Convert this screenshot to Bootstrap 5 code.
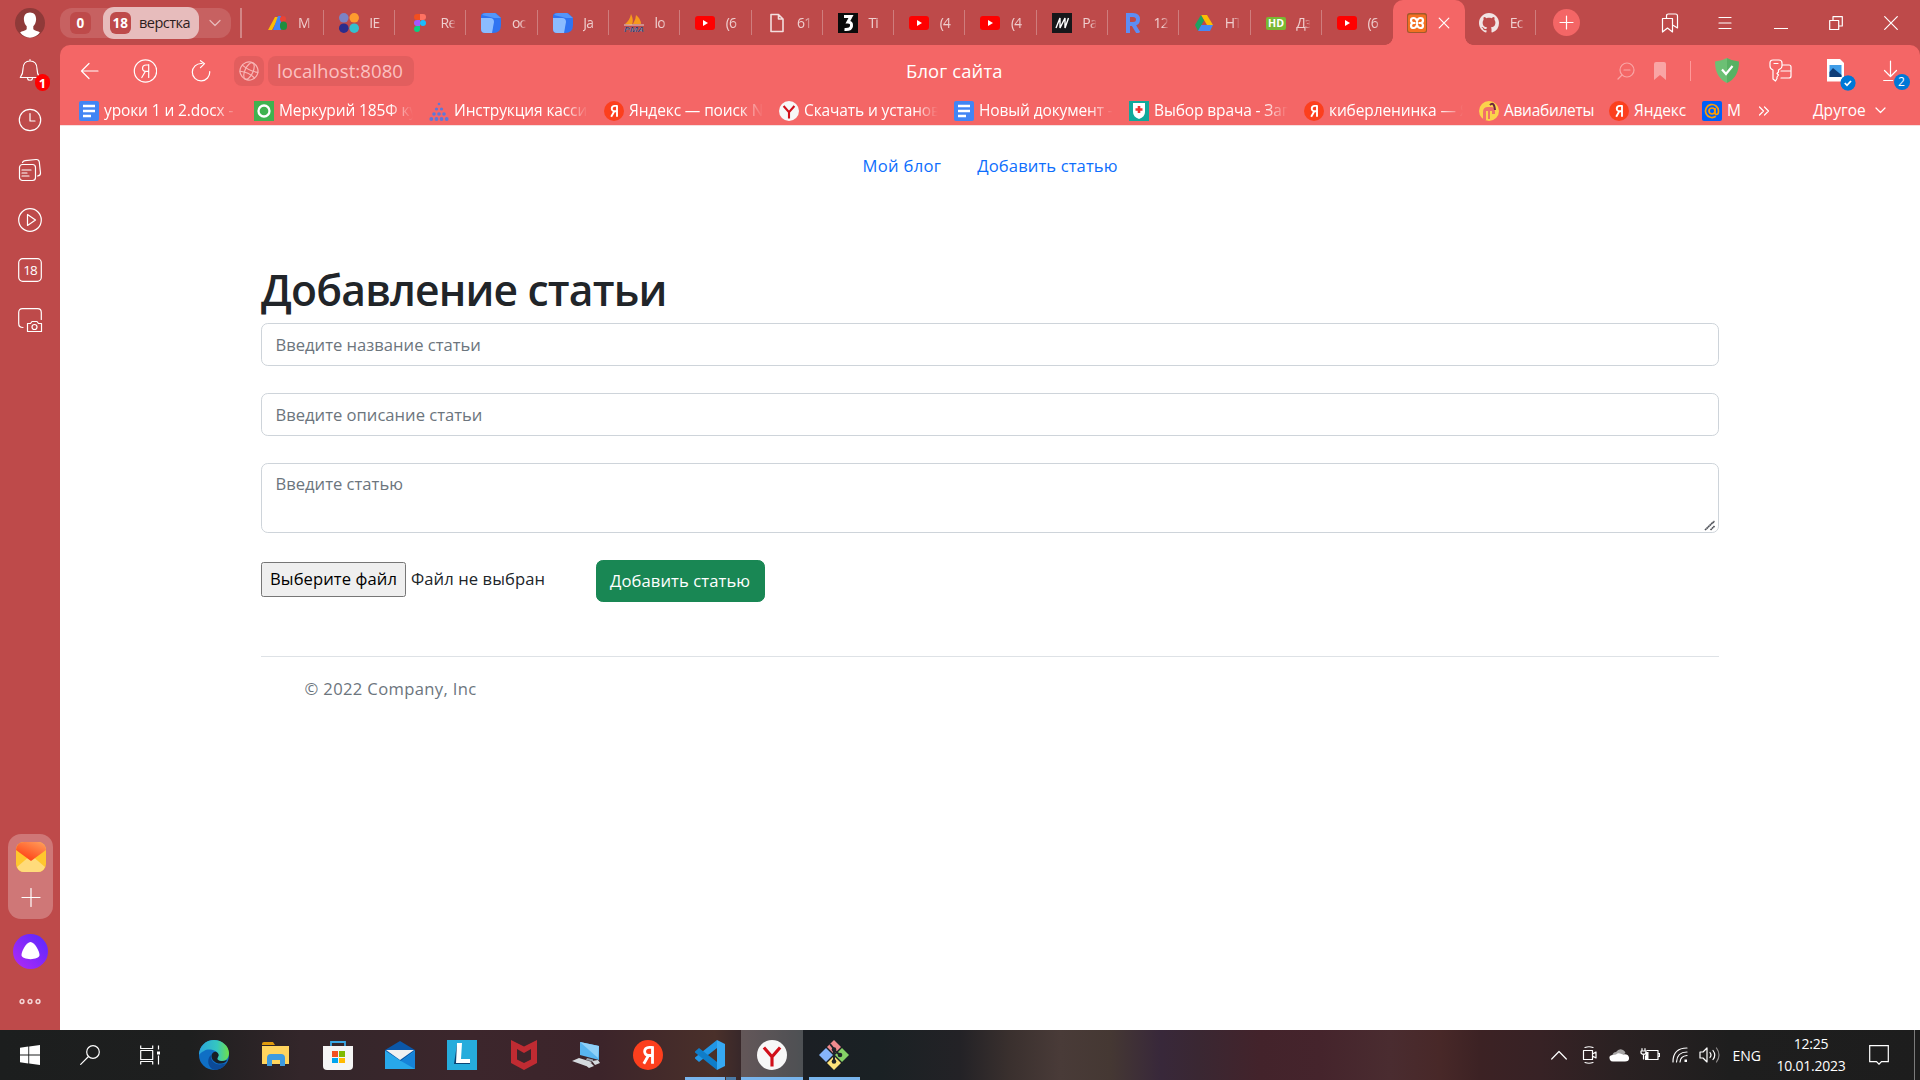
<!DOCTYPE html>
<html lang="ru">
<head>
<meta charset="utf-8">
<title>Блог сайта</title>
<link href="https://cdn.jsdelivr.net/npm/bootstrap@5.3.0/dist/css/bootstrap.min.css" rel="stylesheet">
<style>
html{font-size:18px}
body{width:1920px;height:1080px;overflow:hidden;font-family:"Open Sans","Noto Sans",sans-serif;background:#be4a4a}
svg{display:block;flex:none}
.ln{fill:none;stroke:#fff;stroke-width:1.2;stroke-linecap:round;stroke-linejoin:round}
.clip{overflow:hidden;white-space:nowrap}
.side{width:60px;flex:none}
.side-ic{height:50px}
.side-panel{width:45px;height:85px;border-radius:13px;background:#cf7777;margin-left:1px;margin-top:489px;padding-top:8px}
.dot-num{position:absolute;display:flex;align-items:center;justify-content:center;color:#fff;border-radius:9px}
.tabs{height:45px}
.grp{width:171px;height:30px;border-radius:12px;background:#c76161;margin-top:1px;padding-left:9.5px}
.grp-n{width:21.5px;height:22px;border-radius:6px;background:#be4a4a;color:#fff;font:bold 13.5px/22px "Open Sans",sans-serif;text-align:center}
.grp-on{width:95.5px;height:32px;border-radius:11px;background:#e7bcbc;color:#2c1c1c;font-size:14.5px;margin-left:12px;padding-left:6.5px}
.tb{width:71.3px;height:45px;padding-left:15px;position:relative;flex:none}
.tb::after{content:"";width:1px;height:25px;background:#cf7d7d;margin-left:auto}
.tb.nosep::after{display:none}
.tb span{width:14px;margin-left:10.5px;font-size:14px;color:#efcfcf;letter-spacing:-.8px;-webkit-mask-image:linear-gradient(90deg,#000 60%,rgba(0,0,0,.15));mask-image:linear-gradient(90deg,#000 60%,rgba(0,0,0,.15))}
.tb-on{width:72px;background:#f46666;border-radius:10px 10px 0 0;padding-left:14px}
.tb-on::before,.tb-on i{content:"";position:absolute;bottom:0;width:8px;height:8px;background:radial-gradient(circle at 0 0,transparent 7.5px,#f46666 8px)}
.tb-on::before{left:-8px}
.tb-on i{right:-8px;background:radial-gradient(circle at 100% 0,transparent 7.5px,#f46666 8px)}
.pane{background:#f46666;border-radius:10px 10px 0 0;height:80px}
.addr{height:51px}
.bx{background:#e25e5e;border-radius:8px;height:30px}
.bmk{height:29px;padding-left:19px;color:#fff;font-size:15.5px;letter-spacing:-.12px}
.bk{width:175px;height:20px;flex:none}
.bk span{width:134px;margin-left:5px;-webkit-mask-image:linear-gradient(90deg,#000 82%,transparent);mask-image:linear-gradient(90deg,#000 82%,transparent)}
.sheet{height:905px;background:#fff;border-top:1px solid #f6dede}
.wrap{width:1458px;margin:0 auto}
.t17{font-size:16.6px}
.head-nav .nav-link{letter-spacing:.1px;line-height:27px}
.head-nav{padding-top:17px;padding-bottom:18px;margin-bottom:56px}
h1{font-weight:600;font-size:42.6px;line-height:54px;letter-spacing:-.83px}
.form-control{font-size:16.6px;height:42.75px;margin-bottom:27px;border-color:#ced4da;color:#212529}
.form-control::placeholder{color:#6c757d}
textarea.form-control{height:70px;resize:none;display:block;padding-top:8px}
.grip{position:absolute;right:3px;bottom:2px}
.pick{border:1px solid #767676;background:#efefef;border-radius:2.5px;height:35px;width:145px;padding:0;color:#000;white-space:nowrap;letter-spacing:.08px}
.foot{margin-top:54px;border-top:1px solid #dee2e6;padding:20px 0 0 43.5px;color:#6c757d;letter-spacing:.35px}
.task{height:50px;background:linear-gradient(90deg,#1c1e1e 0,#1e1f1f 190px,#33262a 300px,#3c262c 470px,#3c242a 600px,#4a302a 715px,#38282a 741px,#1b1f24 805px,#1a2124 880px,#232226 960px,#3a302e 1010px,#493b38 1060px,#453833 1110px,#38283a 1160px,#3a2732 1200px,#43232b 1260px,#45242c 1320px,#4a2c30 1390px,#482828 1440px,#3c2224 1480px,#372225 1540px,#2a2122 1620px,#1e1e1e 1730px,#1d1d1d)}
.tk{width:62px;height:50px;position:relative;flex:none}
.tk.act{background:rgba(255,255,255,.22)}
.tk.st{width:60px}
.ub{position:absolute;bottom:0;height:3px;background:#78b4ec;left:6px;right:5px}
.act .ub{left:0;right:0}
.tray{color:#fff;font-size:14px}
</style>
</head>
<body>
<svg width="0" height="0" class="position-absolute">
<defs>
<linearGradient id="edgeA" x1="0" y1="0" x2="1" y2="0"><stop offset="0" stop-color="#2aa5dc"/><stop offset=".6" stop-color="#35c6c0"/><stop offset="1" stop-color="#6fe04a"/></linearGradient>
<linearGradient id="alice" x1="1" y1="0" x2="0" y2="1"><stop offset="0" stop-color="#5528ff"/><stop offset="1" stop-color="#b429f5"/></linearGradient>
<linearGradient id="mailg" x1="1" y1="0" x2="0.3" y2="1"><stop offset="0" stop-color="#ffa15e"/><stop offset="1" stop-color="#ff3d12"/></linearGradient>
<linearGradient id="shield"><stop offset=".5" stop-color="#6cc074"/><stop offset=".5" stop-color="#58b163"/></linearGradient>
</defs>
<symbol id="yt" viewBox="0 0 20 20"><rect y="3" width="20" height="14" rx="3" fill="#f00"/><path d="M8 7l5 3-5 3z" fill="#fff"/></symbol>
<symbol id="ya" viewBox="0 0 20 20"><circle cx="10" cy="10" r="10" fill="#fc3f1d"/><path d="M13 4.200v11.600M13 4.900h-2.200c-4 0-4 5.400-.3 5.400H13M10.300 10.300L7.200 15.800" fill="none" stroke="#fff" stroke-width="1.900"/></symbol>
<symbol id="yb" viewBox="0 0 20 20"><circle cx="10" cy="10" r="10" fill="#f7f7f7"/><path d="M4.600 5L10 11.200 15.400 5M10 11v6.600" fill="none" stroke="#d1101a" stroke-width="2.100"/></symbol>
<symbol id="doc" viewBox="0 0 20 20"><rect width="20" height="20" rx="2" fill="#4285f4"/><path d="M4 5h12M4 10h12M4 15h8" stroke="#fff" stroke-width="2.400"/></symbol>
<symbol id="cube" viewBox="0 0 20 20"><path d="M0 3Q0 0 4 0h11l5 5v7q0 8-8 8H4q-4 0-4-4z" fill="#2f74f2"/><path d="M0 5h9q4 0 4 4l-2 11H4q-4 0-4-4z" fill="#8bbcff"/><path d="M1 2Q2 0 5 0h9l6 5h-7z" fill="#5596fa"/></symbol>
</svg>

<div class="d-flex flex-column h-100">
<div class="d-flex" style="height:1030px">
<aside class="side d-flex flex-column align-items-center">
  <div class="tabs d-flex align-items-center justify-content-center">
    <svg width="30" height="30" viewBox="0 0 30 30"><circle cx="15" cy="15" r="15" fill="#8f3a39"/><path d="M15 4.500c4.200 0 6.300 3 6.100 7-.1 3-1.300 5.300-2.800 6.800v3c1.500 1.500 5 1.800 6.600 3.300-5 6.800-14.800 6.800-19.800 0 1.600-1.500 5.300-1.800 6.600-3.300v-3C10.200 16.800 9 14.500 8.900 11.500c-.2-4 1.900-7 6.100-7z" fill="#fff"/></svg>
  </div>
  <div class="side-ic d-flex align-items-center position-relative"><svg class="ln" width="24" height="24" viewBox="0 0 24 24"><path d="M12 1.500v1.500M2.300 19.500c2-2.500 2.700-4 2.700-8.500 0-5 2.500-8 7-8s7 3 7 8c0 4.500.7 6 2.700 8.500zM9.500 20.500c.5 2.300 4.500 2.300 5 0"/></svg><span class="dot-num" style="left:17px;top:29px;width:15px;height:17px;background:#f00;font:bold 13px 'Open Sans',sans-serif">1</span></div>
  <div class="side-ic d-flex align-items-center"><svg class="ln" width="24" height="24" viewBox="0 0 24 24"><circle cx="12" cy="12" r="10.700"/><path d="M12 5.500V13h5"/></svg></div>
  <div class="side-ic d-flex align-items-center"><svg class="ln" width="24" height="24" viewBox="0 0 24 24"><rect x="1.500" y="6.500" width="16" height="16" rx="3"/><path d="M4 12h9M4 15h5M4 18h7M4.500 4.500Q5 3 7 2.700L18 1.500q3-.2 3.300 2.500L22.500 15q.2 2.500-3 3"/></svg></div>
  <div class="side-ic d-flex align-items-center"><svg class="ln" width="24" height="24" viewBox="0 0 24 24"><circle cx="12" cy="12" r="11.300"/><path d="M9.500 6.500v11l8-5.500z"/></svg></div>
  <div class="side-ic d-flex align-items-center position-relative"><svg class="ln" width="24" height="24" viewBox="0 0 24 24"><rect x=".7" y=".7" width="22.600" height="22.600" rx="4"/></svg><span class="dot-num w-100" style="left:0;top:15px;height:20px;font-size:13.500px;letter-spacing:-1px">18</span></div>
  <div class="side-ic d-flex align-items-center"><svg class="ln" width="26" height="24" viewBox="-1 0 26 24"><path d="M5 19.500Q.7 19.500.7 15.500V4.500Q.7.700 4.500.700h15q3.800 0 3.800 3.800v7M9.500 15.500h3l1.500-2h5l1.500 2h3v8h-14z"/><circle cx="16.500" cy="19" r="2.500"/></svg></div>
  <div class="side-panel d-flex flex-column align-items-center">
    <svg width="30" height="30" viewBox="0 0 30 30"><rect width="30" height="30" rx="8" fill="#ffc72e"/><path d="M1 25L15 13l14 12q-2 5-7 5H8q-5 0-7-5z" fill="#ffdb7b"/><path d="M0 8q1-8 8-8h14q7 0 8 8L15 19z" fill="url(#mailg)"/></svg>
    <svg class="ln" style="margin-top:16px" width="20" height="20" viewBox="0 0 20 20"><path d="M1 9.500h18M10 .5v18"/></svg>
  </div>
  <svg style="margin-top:15px" width="35" height="35" viewBox="0 0 35 35"><circle cx="17.500" cy="17.500" r="17.500" fill="url(#alice)"/><path d="M17.500 8c4 0 9 9 9 13 0 5.500-18 5.500-18 0 0-4 5-13 9-13z" fill="#fff"/></svg>
  <svg class="ln" style="margin-top:28px" width="24" height="8" viewBox="0 0 24 8"><g stroke-width="1.500" stroke="#f4d6d6"><circle cx="4" cy="4.500" r="1.900"/><circle cx="12" cy="4.500" r="1.900"/><circle cx="20" cy="4.500" r="1.900"/></g></svg>
</aside>

<main class="flex-grow-1">
  <div class="tabs d-flex align-items-center">
    <div class="grp d-flex align-items-center">
      <div class="grp-n">0</div>
      <div class="grp-on d-flex align-items-center"><div class="grp-n">18</div><span style="margin-left:8px;letter-spacing:-.5px">верстка</span></div>
      <svg class="ln ms-auto" style="margin-right:10px;stroke:#e8bcbc" width="12" height="8" viewBox="0 0 12 8"><path d="M1 1.500l5 5 5-5"/></svg>
    </div>
    <div style="width:2px;height:30px;background:#d28585;margin:0 10.500px 0 9px"></div>
    <div class="tb d-flex align-items-center"><svg width="20" height="20" viewBox="0 0 20 20"><path d="M0 17L7 4h4L4 17z" fill="#fbbc04"/><path d="M5 17L10 3h3v14z" fill="#4285f4"/><rect x="12" y="3" width="6" height="6" rx="3" fill="#ea4335"/><rect x="12" y="8.500" width="7" height="8.500" rx="3.500" fill="#1e8e3e"/></svg><span class="clip">M</span></div>
    <div class="tb d-flex align-items-center"><svg width="20" height="20" viewBox="0 0 20 20"><circle cx="4.800" cy="4.800" r="4.800" fill="#7b83c4"/><circle cx="15.200" cy="4.800" r="4.800" fill="#ff9c2e"/><circle cx="4.800" cy="15.200" r="4.800" fill="#2b2c8c"/><circle cx="15.200" cy="15.200" r="4.800" fill="#35c0ce"/></svg><span class="clip">IE</span></div>
    <div class="tb d-flex align-items-center"><svg width="20" height="20" viewBox="0 0 20 20"><path d="M10 1H7a3 3 0 000 6h3z" fill="#f24e1e"/><path d="M10 1h3a3 3 0 010 6h-3z" fill="#ff7262"/><path d="M10 7H7a3 3 0 000 6h3z" fill="#a259ff"/><circle cx="13" cy="10" r="3" fill="#1abcfe"/><path d="M10 13H7a3 3 0 103 3z" fill="#0acf83"/></svg><span class="clip">Re</span></div>
    <div class="tb d-flex align-items-center"><svg width="20" height="20"><use href="#cube"/></svg><span class="clip">ос</span></div>
    <div class="tb d-flex align-items-center"><svg width="20" height="20"><use href="#cube"/></svg><span class="clip">Ja</span></div>
    <div class="tb d-flex align-items-center"><svg width="20" height="20" viewBox="0 0 20 20"><path d="M1 11Q6 7 7 1q3 6 1 11zM9 11q3-5 3-9 5 4 5 9z" fill="#f79a1c"/><path d="M0 12h20" stroke="#dfd7d0"/><text x="0" y="19" font-size="7.500" font-weight="bold" font-style="italic" fill="#23245c" textLength="20" lengthAdjust="spacingAndGlyphs" stroke="#ddd" stroke-width=".2">PMA</text></svg><span class="clip">lo</span></div>
    <div class="tb d-flex align-items-center"><svg width="20" height="20"><use href="#yt"/></svg><span class="clip">(6</span></div>
    <div class="tb d-flex align-items-center"><svg class="ln" style="stroke:#f3dede" width="20" height="20" viewBox="0 0 20 20"><path stroke-width="1.600" d="M4 1.500h7.500L16 6v12.500H4zM11.500 1.500V6H16"/></svg><span class="clip">61</span></div>
    <div class="tb d-flex align-items-center"><svg width="20" height="20" viewBox="0 0 20 20"><path d="M0 0h20v20H0z" fill="#0b0b0b"/><path d="M6 3.500h7L10 9q4 0 3.500 4-.5 4-7 3.500" fill="none" stroke="#fff" stroke-width="3"/></svg><span class="clip">Ti</span></div>
    <div class="tb d-flex align-items-center"><svg width="20" height="20"><use href="#yt"/></svg><span class="clip">(4</span></div>
    <div class="tb d-flex align-items-center"><svg width="20" height="20"><use href="#yt"/></svg><span class="clip">(4</span></div>
    <div class="tb d-flex align-items-center"><svg width="20" height="20" viewBox="0 0 20 20"><path d="M0 0h20v20H0z" fill="#17171a"/><path d="M4 15L8 5v10l5-10v10l3.500-10" fill="none" stroke="#fff" stroke-width="1.400"/></svg><span class="clip">Pa</span></div>
    <div class="tb d-flex align-items-center"><svg width="20" height="20" viewBox="0 0 20 20"><path d="M5 20V2h5q5 0 5 4.500T10 11H5M10 11l5.500 9" fill="none" stroke="#5d8df5" stroke-width="4"/></svg><span class="clip">12</span></div>
    <div class="tb d-flex align-items-center"><svg width="20" height="20" viewBox="0 0 20 20"><path d="M7 2h6l6 10h-6z" fill="#fbbc04"/><path d="M7 2l3 5.500L4 18l-3-6z" fill="#1da362"/><path d="M7.300 12H19l-3 6H4z" fill="#4688f4"/></svg><span class="clip">НТ</span></div>
    <div class="tb d-flex align-items-center"><svg width="20" height="20" viewBox="0 0 20 20"><rect y="4" width="20" height="13" rx="2" fill="#78b833"/><text x="2" y="14.300" font-size="10" font-weight="bold" fill="#fff" textLength="16" lengthAdjust="spacingAndGlyphs">HD</text></svg><span class="clip">Дз</span></div>
    <div class="tb nosep d-flex align-items-center"><svg width="20" height="20"><use href="#yt"/></svg><span class="clip">(6</span></div>
    <div class="tb tb-on nosep d-flex align-items-center"><svg width="20" height="20" viewBox="0 0 20 20"><rect width="20" height="20" rx="2.500" fill="#a05a2c"/><rect x="1" y="1.500" width="18" height="17.500" rx="2" fill="#f37021"/><path d="M8 10H6.500Q4 10 4 7.300 4 5 6.500 5 9 5 10 8q1-3 3.500-3Q16 5 16 7.300 16 10 13.500 10H12M8 10H6.500Q4 10 4 12.700 4 15 6.500 15 9 15 10 12q1 3 3.500 3 2.500 0 2.500-2.300Q16 10 13.500 10H12M8.500 10h3" fill="none" stroke="#fff" stroke-width="2.200"/></svg>
      <svg class="ln" style="margin-left:11px" width="12" height="12" viewBox="0 0 12 12"><path d="M1.200 1.200l9.600 9.600M10.800 1.200l-9.600 9.600"/></svg><i></i></div>
    <div class="tb d-flex align-items-center" style="padding-left:14px;width:71px"><svg width="20" height="20" viewBox="0 0 16 16"><path fill="#f1e4e4" d="M8 0C3.580 0 0 3.580 0 8c0 3.540 2.290 6.530 5.470 7.590.4.070.55-.17.55-.38 0-.19-.01-.82-.01-1.490-2.010.37-2.530-.49-2.690-.94-.09-.23-.48-.94-.82-1.130-.28-.15-.68-.52-.01-.53.63-.01 1.080.58 1.230.82.72 1.210 1.870.87 2.330.66.07-.52.28-.87.51-1.070-1.780-.2-3.640-.89-3.640-3.950 0-.87.31-1.590.82-2.150-.08-.2-.36-1.020.08-2.120 0 0 .67-.21 2.200.82.64-.18 1.320-.27 2-.27s1.360.09 2 .27c1.530-1.040 2.200-.82 2.200-.82.44 1.100.16 1.920.08 2.120.51.56.82 1.270.82 2.150 0 3.070-1.870 3.750-3.650 3.950.29.25.54.73.54 1.480 0 1.070-.01 1.930-.01 2.200 0 .21.15.46.55.38A8.010 8.010 0 0016 8c0-4.420-3.580-8-8-8"/></svg><span class="clip">Ec</span></div>
    <svg class="ln" style="margin-left:16.500px" width="27" height="27" viewBox="0 0 27 27"><circle cx="13.500" cy="13.500" r="13.500" fill="#f46666" stroke="none"/><path d="M7 13.500h13M13.500 7v13"/></svg>
    <div class="ms-auto d-flex align-items-center" style="padding-right:22px">
      <svg class="ln" width="18" height="20" viewBox="0 0 18 20"><path d="M1.500 5.500h10V19l-5-4-5 4zM5.500 5V3q0-2 2-2h7q2 0 2 2v12l-4-2.500"/></svg>
      <svg class="ln" style="margin-left:39px" width="14" height="14" viewBox="0 0 14 14"><path d="M1 1.500h12M1 7h12M1 12.500h12"/></svg>
      <svg class="ln" style="margin-left:42px" width="14" height="14" viewBox="0 0 14 14"><path d="M.5 12.500h13"/></svg>
      <svg class="ln" style="margin-left:41px" width="14" height="14" viewBox="0 0 14 14"><path d="M.7 4.500h9v9h-9zM4 4V.7h9.300V10H10"/></svg>
      <svg class="ln" style="margin-left:41px" width="14" height="14" viewBox="0 0 14 14"><path d="M.7.700l12.600 12.600M13.300.700L.7 13.300"/></svg>
    </div>
  </div>

  <div class="pane">
    <div class="addr d-flex align-items-center position-relative" style="padding-left:20px">
      <svg class="ln" width="19" height="18" viewBox="0 0 19 18"><path d="M18 9H1.500M9 1.500L1.500 9 9 16.500"/></svg>
      <svg class="ln" style="margin-left:34px" width="24" height="24" viewBox="0 0 24 24"><circle cx="12.500" cy="12" r="11.200"/><path d="M15.700 5.500v13M15.700 6H13c-4.500 0-4.500 6.300-.5 6.300h3.200M12.300 12.500l-3.500 6"/></svg>
      <svg class="ln" style="margin-left:34px" width="20" height="22" viewBox="0 0 20 22"><path d="M11 3.500H10.500a8.700 8.700 0 108.200 8M9.500.700l4 3-4 4"/></svg>
      <div class="bx d-flex align-items-center justify-content-center" style="width:29.500px;margin-left:23px"><svg class="ln" style="stroke:#f8b5b5" width="20" height="20" viewBox="0 0 20 20"><g transform="rotate(25 10 10)"><circle cx="10" cy="10" r="9"/><ellipse cx="10" cy="10" rx="4" ry="9"/><path d="M1.500 7.500q8.500 2.500 17 0M2 14q8-3 16 0"/></g></svg></div>
      <div class="bx d-flex align-items-center" style="width:146.500px;margin-left:4px;padding-left:9.500px;color:#fbc1c1;font-size:18.600px"><span style="letter-spacing:.05px">localhost:8080</span></div>
      <span style="margin-left:492px;color:#fff;font-size:18.400px;letter-spacing:.15px">Блог сайта</span>
      <div class="ms-auto d-flex align-items-center" style="padding-right:22px">
        <svg class="ln" style="stroke:#f9a5a5" width="18" height="18" viewBox="0 0 18 18"><circle cx="10" cy="8" r="7"/><path d="M5 13l-4 4M7 8h6"/></svg>
        <svg style="margin-left:19px" width="12" height="18" viewBox="0 0 12 18"><path d="M0 18V2q0-2 2-2h8q2 0 2 2v16l-6-5z" fill="#f9a5a5"/></svg>
        <div style="width:1px;height:20px;background:#f99;margin:0 24px 0 24px"></div>
        <svg width="24" height="25" viewBox="0 0 24 25"><path d="M12 0q5 3 12 3.500 0 16-12 21.500Q0 19.500 0 3.500 7 3 12 0z" fill="url(#shield)"/><path d="M7 11.500l4 4.500 6.500-8" fill="none" stroke="#fff" stroke-width="2.200"/></svg>
        <svg class="ln" style="margin-left:30px" width="23" height="23" viewBox="0 0 23 23"><path d="M4 1h6q3 0 3 3v3q0 2-2 3l-1.500 1v2L8 14.500 9.500 16 8 18v1.500L6.500 22 4 20v-9Q1 10 1 7V4q0-3 3-3zM5 4.500h4M14 6h6q2 0 2 2v9q0 2-2 2h-8M12 12h10"/></svg>
        <div class="position-relative" style="margin-left:34px"><svg width="19" height="23" viewBox="0 0 19 23"><path d="M1 0h13l4 4v18.500H1z" fill="#fff"/><rect x="3.500" y="6" width="12" height="12" fill="#3f9de8"/><path d="M3.500 18v-5l3.500-4 8.500 7v2z" fill="#0d3d78"/></svg>
        <svg class="dot-num" style="left:13.500px;top:15.500px" width="16" height="16" viewBox="0 0 16 16"><circle cx="8" cy="8" r="7.700" fill="#0078d7"/><path d="M4.800 8l2.200 2.300 4-4.300" fill="none" stroke="#fff" stroke-width="1.800"/></svg></div>
        <div class="position-relative" style="margin-left:38px"><svg class="ln" width="15" height="22" viewBox="0 0 15 22"><path d="M7.500 1v15M1.500 10.500l6 6 6-6M.7 20.500h9"/></svg><span class="dot-num" style="left:10.500px;top:14px;width:16px;height:16px;background:#0078d7;font-size:12px">2</span></div>
      </div>
    </div>
    <div class="bmk d-flex align-items-center clip">
      <div class="bk d-flex align-items-center"><svg width="20" height="20"><use href="#doc"/></svg><span class="clip">уроки 1 и 2.docx - </span></div>
      <div class="bk d-flex align-items-center"><svg width="20" height="20" viewBox="0 0 20 20"><path d="M0 0h20v20H0z" fill="#3fb24f"/><circle cx="10" cy="10" r="5.500" fill="none" stroke="#fff" stroke-width="2.300"/></svg><span class="clip">Меркурий 185Ф ку</span></div>
      <div class="bk d-flex align-items-center"><svg width="20" height="20" viewBox="0 0 20 20" fill="#5c78d8"><circle cx="10" cy="3" r="1.300"/><circle cx="7.500" cy="8" r="1.600"/><circle cx="12.500" cy="8" r="1.600"/><circle cx="5" cy="13" r="1.800"/><circle cx="10" cy="13" r="1.800"/><circle cx="15" cy="13" r="1.800"/><circle cx="2.300" cy="18" r="1.900"/><circle cx="7.500" cy="18" r="1.900"/><circle cx="12.500" cy="18" r="1.900"/><circle cx="17.700" cy="18" r="1.900"/></svg><span class="clip">Инструкция касси</span></div>
      <div class="bk d-flex align-items-center"><svg width="20" height="20"><use href="#ya"/></svg><span class="clip">Яндекс — поиск N</span></div>
      <div class="bk d-flex align-items-center"><svg width="20" height="20"><use href="#yb"/></svg><span class="clip">Скачать и установ</span></div>
      <div class="bk d-flex align-items-center"><svg width="20" height="20"><use href="#doc"/></svg><span class="clip">Новый документ - </span></div>
      <div class="bk d-flex align-items-center"><svg width="20" height="20" viewBox="0 0 20 20"><path d="M0 0h20v20H0z" fill="#10a99b"/><path d="M4 2h12v9q0 5-6 7-6-2-6-7z" fill="#fff"/><path d="M10 5v7M6.500 8.500h7" stroke="#e33" stroke-width="2.600"/></svg><span class="clip">Выбор врача - Зап</span></div>
      <div class="bk d-flex align-items-center"><svg width="20" height="20"><use href="#ya"/></svg><span class="clip">киберленинка — Я</span></div>
      <svg width="20" height="20" viewBox="0 0 20 20"><circle cx="10" cy="10" r="10" fill="#fbd34b"/><path d="M4 19v-8q0-5 5-5h3q4 0 4 5v2h-3v-3h-2v8h-2v-8H7v9z" fill="#f0706a"/><path d="M11 4q4-4 5 5" fill="none" stroke="#6b2440" stroke-width="2"/></svg><span style="margin:0 15px 0 5px;letter-spacing:-.3px">Авиабилеты</span>
      <svg width="20" height="20"><use href="#ya"/></svg><span style="margin:0 16px 0 5px">Яндекс</span>
      <svg width="20" height="20" viewBox="0 0 20 20"><rect width="20" height="20" rx="2" fill="#005ff9"/><path d="M13 7v4.500q0 2 1.700 2t1.800-3.500a6.500 6.500 0 10-2.700 5.300" fill="none" stroke="#ff9e00" stroke-width="1.700"/><circle cx="10" cy="10" r="3" fill="none" stroke="#ff9e00" stroke-width="1.700"/></svg><span class="clip" style="width:14px;margin-left:5px">M</span>
      <svg class="ln" style="margin-left:17px" width="12" height="10" viewBox="0 0 12 10"><path d="M1.500 1l4 4-4 4M6.500 1l4 4-4 4"/></svg>
      <span style="margin-left:43px;letter-spacing:.05px">Другое</span>
      <svg class="ln" style="margin-left:9px" width="11" height="7" viewBox="0 0 11 7"><path d="M1 1l4.500 4.500L10 1"/></svg>
    </div>
  </div>

  <div class="sheet">
    <div class="wrap">
      <header class="head-nav">
        <ul class="nav justify-content-center t17">
          <li class="nav-item"><a class="nav-link" href="#" style="letter-spacing:.33px">Мой блог</a></li>
          <li class="nav-item"><a class="nav-link" href="#">Добавить статью</a></li>
        </ul>
      </header>
      <h1 style="margin-bottom:7px">Добавление статьи</h1>
      <form>
        <input class="form-control" placeholder="Введите название статьи">
        <input class="form-control" placeholder="Введите описание статьи">
        <div class="position-relative">
          <textarea class="form-control" placeholder="Введите статью"></textarea>
          <svg class="grip" width="12" height="12" viewBox="0 0 12 12"><path d="M1 11L10.500 2M6.500 11l4-4" stroke="#50535a" stroke-width="1.700" stroke-dasharray="1.800 .3"/></svg>
        </div>
        <div class="d-flex align-items-center t17">
          <div class="d-flex align-items-center" style="margin-bottom:3px"><button type="button" class="pick">Выберите файл</button><span style="margin-left:5px;letter-spacing:.08px">Файл не выбран</span></div>
          <button type="button" class="btn btn-success p-0" style="margin-left:50.500px;width:169px;height:42.750px;font-size:16.600px;letter-spacing:.1px;padding-top:1px!important">Добавить статью</button>
        </div>
      </form>
      <footer class="foot t17">© 2022 Company, Inc</footer>
    </div>
  </div>
</main>
</div>

<div class="task d-flex align-items-center">
  <div class="tk st d-flex align-items-center justify-content-center"><svg width="20" height="20" viewBox="0 0 20 20" fill="#fff"><path d="M0 2.800L8.300 1.600v7.900H0zM9.200 1.500L20 0v9.500H9.200zM0 10.400h8.300v8L0 17.200zM9.200 10.400H20V20L9.200 18.500z"/></svg></div>
  <div class="tk st d-flex align-items-center justify-content-center"><svg class="ln" width="20" height="20" viewBox="0 0 20 20"><circle cx="13" cy="7" r="6.300"/><path d="M8.500 11.500L.7 19.300"/></svg></div>
  <div class="tk st d-flex align-items-center justify-content-center" style="margin-right:3px"><svg class="ln" width="20" height="20" viewBox="0 0 20 20"><path stroke-linecap="square" d="M.7 5.500h12v9H.7zM.7 1v2.500h12V1M.7 19v-2.500h12V19M18.500 1v3M18.500 11v8"/><path d="M17 6.500h3v3h-3z" fill="#fff" stroke="none"/></svg></div>
  <div class="tk d-flex align-items-center justify-content-center"><svg width="30" height="30" viewBox="0 0 30 30"><circle cx="15" cy="15" r="15" fill="#0f6fc5"/><path d="M0 15C0 6 7 0 15 0s15 6 15 13c0 5-3 8-7 8-3 0-5-1-5-2s2-2 1-5c-1-4-10-6-14-3-3 1.500-4.500 3-5 4z" fill="url(#edgeA)"/><path d="M12 15c-1 7 6 12 15 8-3 5-7 7-11 7-7-1-9-11-4-15z" fill="#0c4a97"/><path d="M12.500 16c0-3 3-5 5-4 2 1 3 3 1.500 5-1.500 2 0 4 4 4 2 0 4-.5 5-1-1 2-3 3.500-6 3.500-5 .5-9.500-3-9.500-7.500z" fill="#191f26"/></svg></div>
  <div class="tk d-flex align-items-center justify-content-center"><svg width="28" height="26" viewBox="0 0 28 26"><path d="M0 2q0-2 2-2h9l2 3H0z" fill="#e09b0c"/><path d="M0 4h27v18H0z" fill="#ffd55e"/><path d="M5 24v-8q0-4 4-4h10q4 0 4 4v8h-5v-6H10v6z" fill="#3d9be0"/></svg></div>
  <div class="tk d-flex align-items-center justify-content-center"><svg width="30" height="30" viewBox="0 0 30 30"><path d="M8 8V2h14v6" fill="none" stroke="#39a8e6" stroke-width="1.800"/><path d="M0 6h30v20q0 4-4 4H4q-4 0-4-4z" fill="#f5f5f5"/><path d="M9 11h6v6H9z" fill="#f25022"/><path d="M16 11h6v6h-6z" fill="#7fba00"/><path d="M9 18h6v5H9z" fill="#00a4ef"/><path d="M16 18h6v5h-6z" fill="#ffb900"/></svg></div>
  <div class="tk d-flex align-items-center justify-content-center"><svg width="30" height="28" viewBox="0 0 30 28"><path d="M0 9L15 0l15 9v18H0z" fill="#0b57a8"/><path d="M1 9h28L15 19z" fill="#f1f1f1"/><path d="M0 9.500L16 20l14-10.500V28H0z" fill="#28a8ea"/><path d="M30 10L16 20l14 8z" fill="#1683d8"/></svg></div>
  <div class="tk d-flex align-items-center justify-content-center"><svg width="30" height="30" viewBox="0 0 30 30"><path d="M0 0h30v30H0z" fill="#26acdc"/><path d="M7 24l3-20h4v17h9v3z" fill="#0b4474"/><path d="M10 3h5l-1 16h9v4H9z" fill="#fff"/></svg></div>
  <div class="tk d-flex align-items-center justify-content-center"><svg width="28" height="30" viewBox="0 0 28 30"><path d="M1 0l13 6.500L27 0v23l-13 7-13-7zM7 9v10.500l7 3.500 7-3.500V9l-7 4z" fill="#c02b32" fill-rule="evenodd"/></svg></div>
  <div class="tk d-flex align-items-center justify-content-center"><svg width="30" height="28" viewBox="0 0 30 28"><path d="M9 1l19 4v14L9 14z" fill="#58b5f0"/><path d="M9 1l19 4-1 12z" fill="#8fd0f8"/><path d="M16 17l6 1.500v2l-7-1.500z" fill="#9aa4ad"/><path d="M1 20l7-3 13 4-6 4zM14 24l6-2 3 3-5 2zM21 20l6-1 2 3-5 2z" fill="#d5dade"/></svg></div>
  <div class="tk d-flex align-items-center justify-content-center"><svg width="30" height="30"><use href="#ya"/></svg></div>
  <div class="tk d-flex align-items-center justify-content-center"><svg width="30" height="30" viewBox="0 0 30 30"><path d="M22 0v8L4 22l-4-3.500v-1z" fill="#2196e6"/><path d="M22 30v-8L4 8 0 11.500v1z" fill="#0f7dc9"/><path d="M22 0l8 4v22l-8 4z" fill="#36a9f4"/></svg><span class="ub" style="right:16px"></span><span class="ub" style="left:46.500px;background:#4b7aa6"></span></div>
  <div class="tk act d-flex align-items-center justify-content-center"><svg width="30" height="30"><use href="#yb"/></svg><span class="ub"></span></div>
  <div class="tk d-flex align-items-center justify-content-center"><svg width="30" height="30" viewBox="0 0 30 30"><path d="M15 0l7 7-7 7-7-7z" fill="#f08a8e"/><path d="M7 8l7 7-7 7-7-7z" fill="#86b4fa"/><path d="M23 8l7 7-7 7-7-7z" fill="#86d166"/><path d="M15 16l7 7-7 7-7-7z" fill="#fde27a"/><path d="M11 4l4 5v13M15 10l6 5" stroke="#20242a" stroke-width="2" fill="none"/><circle cx="15" cy="9.500" r="2.300" fill="#20242a"/><circle cx="21" cy="15" r="2.300" fill="#20242a"/><circle cx="15" cy="21.500" r="2.300" fill="#20242a"/></svg><span class="ub"></span></div>
  <div class="tray ms-auto d-flex align-items-center">
    <svg class="ln" width="16" height="10" viewBox="0 0 16 10"><path d="M.7 9L8 1.500 15.300 9"/></svg>
    <svg class="ln" style="margin-left:15px" width="16" height="18" viewBox="0 0 16 18"><path d="M1.500 4.500h9v9h-9zM10.500 8l3.500-2v6l-3.500-2M3 1.500q4-1.500 8 0M3 16.500q4 1.500 8 0"/></svg>
    <svg style="margin-left:11px" width="21" height="14" viewBox="0 0 21 14"><path d="M3 8q1-4 4-4 3-4 7-2 2 1 2.500 3l-9 6z" fill="#a6a4a4"/><path d="M1 12q-2-5 3-5l3-.5q2-2 4-1l3 1q5-1 6 3 .5 4-4 4H4q-2 0-3-1.500z" fill="#fff"/></svg>
    <svg class="ln" style="margin-left:10px" width="20" height="14" viewBox="0 0 20 14"><path d="M7 2.500h11v9H5.500V8M18.500 5.500h1v3h-1M2 .7v2M5 .7v2M1 3h5v2q-2.500 3-5 0zM3.500 6v5"/><path d="M5.500 4h3v7h-3z" fill="#fff" stroke="none"/></svg>
    <svg class="ln" style="margin-left:12px" width="16" height="16" viewBox="0 0 16 16"><path d="M1 15Q1 1 15 1M4.500 15Q5 5 15 5M8 15q.5-6 7-6.500"/><path d="M12.500 12.500h2.500v2.500h-2.500z" fill="#fff" stroke="none"/></svg>
    <svg class="ln" style="margin-left:11px" width="21" height="18" viewBox="0 0 21 18"><path d="M1 6h3l4-4v14l-4-4H1zM11 6.500q2 2.500 0 5M14 4.500q3.500 4.500 0 9"/><path d="M17.500 2q5 7 0 14" stroke="#8f8c8c"/></svg>
    <span style="margin-left:13px">ENG</span>
    <div class="text-center" style="margin-left:15px;line-height:22px;width:70px;letter-spacing:-.25px"><div>12:25</div><div>10.01.2023</div></div>
    <svg class="ln" style="margin-left:23px;margin-right:25px" width="20" height="20" viewBox="0 0 20 20"><path stroke-linecap="square" stroke-linejoin="miter" d="M.7.700h18.600v16H12.500l-2.500 2.500-2.500-2.500H.7z"/></svg>
    <div style="width:1px;height:50px;background:#7b7b7b;margin-right:5px"></div>
  </div>
</div>
</div>
<script src="https://cdn.jsdelivr.net/npm/bootstrap@5.3.0/dist/js/bootstrap.bundle.min.js"></script>
</body>
</html>
